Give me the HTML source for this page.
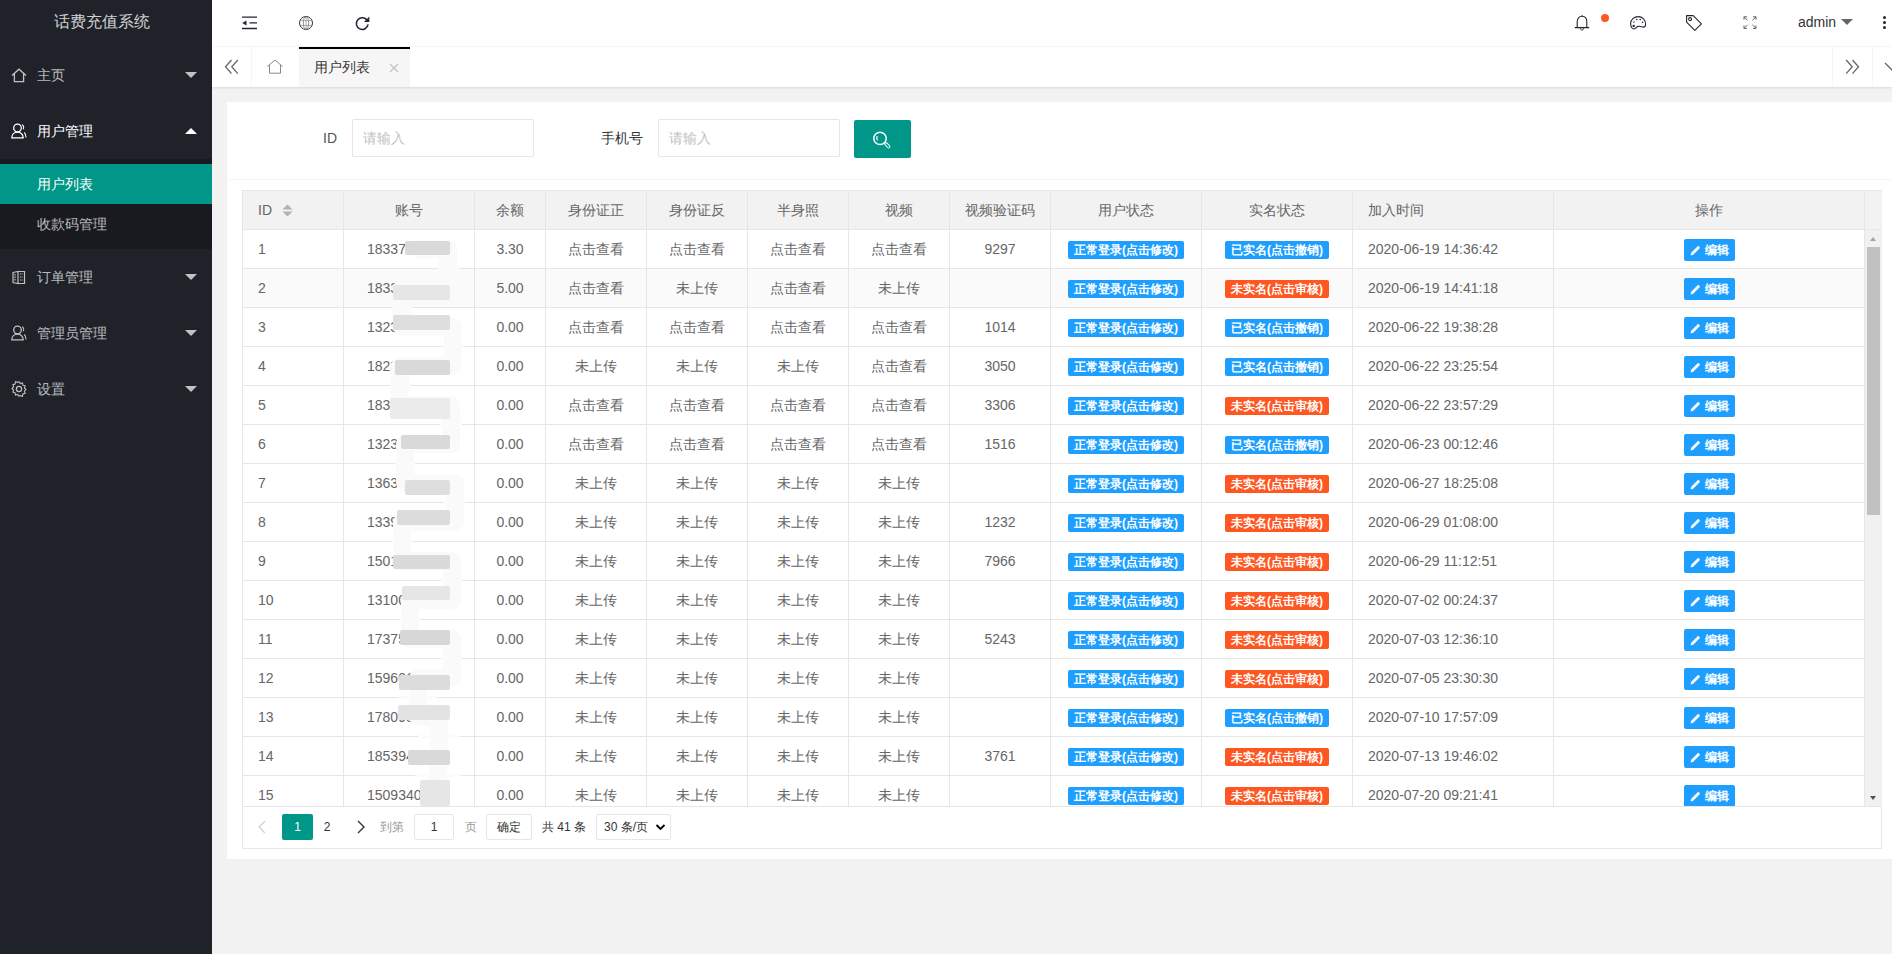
<!DOCTYPE html><html><head><meta charset="utf-8"><style>*{margin:0;padding:0;box-sizing:border-box}
html,body{width:1892px;height:954px;overflow:hidden;background:#f2f2f2;font-family:"Liberation Sans",sans-serif;font-size:14px;color:#666;position:relative}
.abs{position:absolute}
svg{display:block}
#side{position:absolute;left:0;top:0;width:212px;height:954px;background:#20222a}
#logo{position:absolute;left:-4px;top:0;width:212px;height:46px;line-height:44px;text-align:center;color:rgba(255,255,255,.8);font-size:16px}
.nav{position:absolute;left:0;width:212px;height:56px;line-height:56px;color:rgba(255,255,255,.7);font-size:14px}
.nav .t{position:absolute;left:37px;top:0}
.nav svg{position:absolute;left:11px;top:20px}
.nav .arr{position:absolute;left:185px;top:25px;width:0;height:0;border-left:6px solid transparent;border-right:6px solid transparent;border-top:6px solid #c2c2c2}
.nav .arr.up{border-top:0;border-bottom:6px solid #fff;top:25px}
#sub{position:absolute;left:0;top:159px;width:212px;height:90px;background:#191a20}
.subi{position:absolute;left:0;width:212px;height:40px;line-height:40px;color:rgba(255,255,255,.7)}
.subi span{position:absolute;left:37px}
#header{position:absolute;left:212px;top:0;width:1680px;height:47px;background:#fff;border-bottom:1px solid #f6f6f6}
#tabs{position:absolute;left:212px;top:47px;width:1680px;height:40px;background:#fff;box-shadow:0 1px 2px rgba(0,0,0,.1)}
#card{position:absolute;left:227px;top:102px;width:1700px;height:757px;background:#fff}
#cardline{position:absolute;left:227px;top:179px;width:1700px;height:1px;background:#f6f6f6}
.inp{position:absolute;height:38px;border:1px solid #e6e6e6;background:#fff;border-radius:2px;color:#c2c2c2;line-height:36px;padding-left:10px;font-size:14px}
.lbl{position:absolute;color:#333;font-size:14px;line-height:20px}
#tbl{position:absolute;left:242px;top:190px;width:1640px;height:659px;border:1px solid #e6e6e6;background:#fff}
.thead{position:absolute;left:243px;top:191px;width:1639px;height:39px;background:#f2f2f2;border-bottom:1px solid #e6e6e6}
.th{position:absolute;top:0;height:38px;line-height:38px;border-right:1px solid #e6e6e6;color:#666;text-align:center;white-space:nowrap}
.th .sort{position:absolute;left:38.5px;top:12.5px}
.tbody{position:absolute;left:243px;top:230px;width:1621px;height:576px;overflow:hidden}
.tr{position:absolute;left:0;width:1621px;height:39px;border-bottom:1px solid #e6e6e6;background:#fff}
.tr.even{background:#fafafa}
.td{position:absolute;top:0;height:38px;line-height:38px;border-right:1px solid #e6e6e6;color:#666;text-align:center;white-space:nowrap}
.badge{display:inline-block;height:18px;line-height:18px;padding:0 6px;border-radius:2px;color:#fff;font-size:12px;font-weight:bold;vertical-align:middle;position:relative;top:0}
.blue{background:#1e9fff}
.red{background:#ff5722}
.edit{display:inline-block;height:22px;line-height:22px;padding:0 6px;border-radius:2px;background:#1e9fff;color:#fff;font-size:12px;font-weight:bold;vertical-align:middle;position:relative;top:0}
.edit svg{display:inline-block;vertical-align:middle;margin-right:4px;position:relative;top:-1px}
#scroll{position:absolute;left:1864px;top:230px;width:18px;height:576px;background:#f1f1f1;border-left:1px solid #e6e6e6}
#pager{position:absolute;left:243px;top:806px;width:1638px;height:42px;background:#fff;border-top:1px solid #e6e6e6}

.blot{position:absolute;border-radius:2px}
.wcov{position:absolute;height:3px;background:#fbfbfb}
</style></head><body>
<div id="side">
  <div id="logo">话费充值系统</div>
  <div class="nav" style="top:47px"><svg width="16" height="16" viewBox="0 0 16 16"><path d="M1 8.6 8 2.2 15 8.6M3.4 6.6V14.6H12.6V6.6" fill="none" stroke="#c2c2c2" stroke-width="1.3"/></svg><span class="t">主页</span><i class="arr"></i></div>
  <div class="nav" style="top:103px;color:#fff"><svg width="16" height="16" viewBox="0 0 16 16"><circle cx="6.5" cy="5" r="3.8" fill="none" stroke="#fff" stroke-width="1.3"/><path d="M0.8 14.8c0-3.5 2.5-5.6 5.7-5.6s5.7 2.1 5.7 5.6z" fill="none" stroke="#fff" stroke-width="1.3"/><path d="M11 1.8c1.6 .6 2.2 2.5 1.2 4.5M13.2 9.5c1.2 1 1.8 2.6 1.8 5" fill="none" stroke="#fff" stroke-width="1.1"/></svg><span class="t">用户管理</span><i class="arr up"></i></div>
  <div id="sub">
    <div class="subi" style="top:5px;background:#009688;color:#fff"><span>用户列表</span></div>
    <div class="subi" style="top:45px"><span>收款码管理</span></div>
  </div>
  <div class="nav" style="top:249px"><svg width="16" height="16" viewBox="0 0 16 16"><path d="M2 3.5 7 2.5V14.5L2 13.5z M7 2.5H13.5V14.5H7" fill="none" stroke="#c2c2c2" stroke-width="1.2"/><path d="M9 5h3M9 8h3M9 11h3M4 5v7" stroke="#c2c2c2" stroke-width="1.2" stroke-dasharray="1.5 1"/></svg><span class="t">订单管理</span><i class="arr"></i></div>
  <div class="nav" style="top:305px"><svg width="16" height="16" viewBox="0 0 16 16"><circle cx="6.5" cy="5" r="3.8" fill="none" stroke="#c2c2c2" stroke-width="1.3"/><path d="M0.8 14.8c0-3.5 2.5-5.6 5.7-5.6s5.7 2.1 5.7 5.6z" fill="none" stroke="#c2c2c2" stroke-width="1.3"/><path d="M11 1.8c1.6 .6 2.2 2.5 1.2 4.5M13.2 9.5c1.2 1 1.8 2.6 1.8 5" fill="none" stroke="#c2c2c2" stroke-width="1.1"/></svg><span class="t">管理员管理</span><i class="arr"></i></div>
  <div class="nav" style="top:361px"><svg width="16" height="16" viewBox="0 0 16 16"><path d="M8 .8l1.3 1.8 2.2-.6.4 2.2 2.2.7-.7 2.1 1.6 1.6-1.6 1.6.7 2.1-2.2.7-.4 2.2-2.2-.6L8 15.2l-1.3-1.8-2.2.6-.4-2.2-2.2-.7.7-2.1L1 7.4 2.6 5.8l-.7-2.1 2.2-.7.4-2.2 2.2.6z" fill="none" stroke="#c2c2c2" stroke-width="1.1"/><circle cx="8" cy="8" r="2.6" fill="none" stroke="#c2c2c2" stroke-width="1.2"/></svg><span class="t">设置</span><i class="arr"></i></div>
</div>

<div id="header"></div>
<svg class="abs" style="left:240px;top:14px" width="20" height="18" viewBox="0 0 20 18"><path d="M2 3.1H17M9.5 8.9H17M2 14.5H17" stroke="#23262e" stroke-width="1.3"/><path d="M2.2 8.9 6.5 6.4V11.4z" fill="#23262e"/></svg>
<svg class="abs" style="left:298px;top:15px" width="16" height="16" viewBox="0 0 16 16"><circle cx="8" cy="8" r="6.5" fill="none" stroke="#333" stroke-width="1"/><ellipse cx="8" cy="8" rx="2.7" ry="6.5" fill="none" stroke="#666" stroke-width="0.7"/><path d="M1.8 5.6H14.2M1.8 10.4H14.2M8 1.5V14.5" stroke="#777" stroke-width="0.6"/></svg>
<svg class="abs" style="left:354px;top:15px" width="17" height="17" viewBox="0 0 17 17"><path d="M13.2 5.3A5.9 5.9 0 1 0 14.1 9.4" fill="none" stroke="#23262e" stroke-width="1.5"/><path d="M15.3 1.6V7H10z" fill="#23262e"/></svg>
<svg class="abs" style="left:1573px;top:14px" width="18" height="18" viewBox="0 0 18 18"><path d="M4.2 13.5V7.8C4.2 4.6 6.1 2.3 9 2.3S13.8 4.6 13.8 7.8V13.5" fill="none" stroke="#23262e" stroke-width="1.1"/><path d="M1.8 13.6H16.2" stroke="#23262e" stroke-width="1.3"/><path d="M7.4 14.2C7.4 15.4 8.1 16 9 16S10.6 15.4 10.6 14.2" fill="none" stroke="#23262e" stroke-width="1"/><path d="M8.4 1.8H9.6" stroke="#23262e" stroke-width="1"/></svg>
<div class="abs" style="left:1601px;top:14px;width:8px;height:8px;border-radius:50%;background:#ff5722"></div>
<svg class="abs" style="left:1629px;top:15px" width="18" height="16" viewBox="0 0 18 16"><path d="M9.4 1.6C5 1.6 1.6 4.5 1.6 8.6c0 3 1.6 5.4 3.4 5.4 2 0 2.2-2.2 4-2.6 2.4-.5 3.4 .7 5.3 .7 1.7 0 2.3-1.3 2.3-2.8 0-4.4-3.2-7.7-7.2-7.7z" fill="none" stroke="#23262e" stroke-width="1.1"/><circle cx="4.7" cy="10.9" r="1.2" fill="#23262e"/><circle cx="4.9" cy="7" r=".8" fill="#23262e"/><circle cx="7.8" cy="4.5" r=".8" fill="#23262e"/><circle cx="11.2" cy="4.6" r=".8" fill="#23262e"/><circle cx="13.5" cy="7.3" r=".8" fill="#23262e"/></svg>
<svg class="abs" style="left:1685px;top:14px" width="18" height="18" viewBox="0 0 18 18"><path d="M1.6 1.6H8.2L16.4 9.8 9.8 16.4 1.6 8.2z" fill="none" stroke="#23262e" stroke-width="1.1" stroke-linejoin="round"/><circle cx="5.1" cy="5.1" r="1.5" fill="none" stroke="#23262e" stroke-width="1.1"/></svg>
<svg class="abs" style="left:1742px;top:15px" width="16" height="15" viewBox="0 0 16 15"><path d="M2 1.8 5.6 5.4M2 1.8H5M2 1.8V4.8M14 1.8 10.4 5.4M14 1.8H11M14 1.8V4.8M2 13.4 5.6 9.8M2 13.4H5M2 13.4V10.4M14 13.4 10.4 9.8M14 13.4H11M14 13.4V10.4" fill="none" stroke="#555" stroke-width="0.9"/></svg>
<div class="abs" style="left:1798px;top:14px;font-size:14px;line-height:16px;color:#333">admin</div>
<div class="abs" style="left:1841px;top:19px;width:0;height:0;border-left:6px solid transparent;border-right:6px solid transparent;border-top:6px solid #666"></div>
<div class="abs" style="left:1882.5px;top:16px;width:3px;height:3px;background:#23262e;border-radius:50%"></div>
<div class="abs" style="left:1882.5px;top:21px;width:3px;height:3px;background:#23262e;border-radius:50%"></div>
<div class="abs" style="left:1882.5px;top:26px;width:3px;height:3px;background:#23262e;border-radius:50%"></div>
<div id="tabs"></div>
<div class="abs" style="left:251px;top:47px;width:1px;height:40px;background:#f6f6f6"></div>
<div class="abs" style="left:1832px;top:47px;width:1px;height:40px;background:#f6f6f6"></div>
<div class="abs" style="left:1872px;top:47px;width:1px;height:40px;background:#f6f6f6"></div>
<svg class="abs" style="left:223px;top:58px" width="18" height="18" viewBox="0 0 18 18"><path d="M8.5 2 2.5 8.8 8.5 15.6M14.8 2 8.8 8.8 14.8 15.6" fill="none" stroke="#666" stroke-width="1.3"/></svg>
<svg class="abs" style="left:266px;top:58px" width="18" height="18" viewBox="0 0 18 18"><path d="M1.4 8.6 9 2 16.6 8.6M3.5 6.8V15.2H14.5V6.8" fill="none" stroke="#888" stroke-width="1"/></svg>
<div class="abs" style="left:299px;top:47px;width:111px;height:40px;background:#f6f6f6;border-top:2px solid #000"></div>
<div class="abs" style="left:314px;top:57px;font-size:14px;line-height:20px;color:#333">用户列表</div>
<svg class="abs" style="left:389px;top:63px" width="10" height="10" viewBox="0 0 10 10"><path d="M1 1 9 9M9 1 1 9" stroke="#c2c2c2" stroke-width="1.1"/></svg>
<svg class="abs" style="left:1844px;top:58px" width="18" height="18" viewBox="0 0 18 18"><path d="M2.2 2 8.2 8.8 2.2 15.6M8.5 2 14.5 8.8 8.5 15.6" fill="none" stroke="#666" stroke-width="1.3"/></svg>
<svg class="abs" style="left:1883px;top:58px" width="18" height="18" viewBox="0 0 18 18"><path d="M2 5 9 12 16 5" fill="none" stroke="#666" stroke-width="1.3"/></svg>
<div id="card"></div>
<div id="cardline"></div>
<div class="lbl" style="left:323px;top:128px;color:#555">ID</div>
<div class="inp" style="left:352px;top:119px;width:182px">请输入</div>
<div class="lbl" style="left:601px;top:128px">手机号</div>
<div class="inp" style="left:658px;top:119px;width:182px">请输入</div>
<div class="abs" style="left:854px;top:120px;width:57px;height:38px;background:#009688;border-radius:2px"></div>
<svg class="abs" style="left:872px;top:130px" width="20" height="20" viewBox="0 0 20 20"><circle cx="8" cy="8.4" r="6.2" fill="none" stroke="#fff" stroke-width="1.5"/><path d="M5.3 6.2A3.6 3.6 0 0 0 5.5 10.4" fill="none" stroke="#fff" stroke-width="1.3"/><rect x="12.2" y="14" width="6.2" height="2.6" rx="1.3" transform="rotate(45 15.3 15.3)" fill="none" stroke="#fff" stroke-width="1"/></svg>
<div id="tbl"></div>

<div class="thead"><div class="th" style="left:0px;width:101px;text-align:left;padding-left:15px">ID<svg class="sort" width="11" height="13" viewBox="0 0 11 13"><path d="M5.5 0.5 10.5 5.5H0.5z" fill="#b2b2b2"/><path d="M5.5 12.5 10.5 7.5H0.5z" fill="#b2b2b2"/></svg></div><div class="th" style="left:101px;width:131px">账号</div><div class="th" style="left:232px;width:71px">余额</div><div class="th" style="left:303px;width:101px">身份证正</div><div class="th" style="left:404px;width:101px">身份证反</div><div class="th" style="left:505px;width:101px">半身照</div><div class="th" style="left:606px;width:101px">视频</div><div class="th" style="left:707px;width:101px">视频验证码</div><div class="th" style="left:808px;width:151px">用户状态</div><div class="th" style="left:959px;width:151px">实名状态</div><div class="th" style="left:1110px;width:201px;text-align:left;padding-left:15px">加入时间</div><div class="th" style="left:1311px;width:311px">操作</div></div>
<div class="tbody"><div class="tr" style="top:0px"><div class="td" style="left:0px;width:101px;text-align:left;padding-left:15px">1</div><div class="td" style="left:101px;width:131px;text-align:left;padding-left:23px">18337</div><div class="td" style="left:232px;width:71px">3.30</div><div class="td" style="left:303px;width:101px">点击查看</div><div class="td" style="left:404px;width:101px">点击查看</div><div class="td" style="left:505px;width:101px">点击查看</div><div class="td" style="left:606px;width:101px">点击查看</div><div class="td" style="left:707px;width:101px">9297</div><div class="td" style="left:808px;width:151px"><span class="badge blue">正常登录(点击修改)</span></div><div class="td" style="left:959px;width:151px"><span class="badge blue">已实名(点击撤销)</span></div><div class="td" style="left:1110px;width:201px;text-align:left;padding-left:15px">2020-06-19 14:36:42</div><div class="td" style="left:1311px;width:311px"><span class="edit"><svg width="11" height="11" viewBox="0 0 11 11"><path d="M8.2 0.8 10.2 2.8 3.2 9.8 0.6 10.4 1.2 7.8z" fill="#fff"/></svg>编辑</span></div></div><div class="tr even" style="top:39px"><div class="td" style="left:0px;width:101px;text-align:left;padding-left:15px">2</div><div class="td" style="left:101px;width:131px;text-align:left;padding-left:23px">18331</div><div class="td" style="left:232px;width:71px">5.00</div><div class="td" style="left:303px;width:101px">点击查看</div><div class="td" style="left:404px;width:101px">未上传</div><div class="td" style="left:505px;width:101px">点击查看</div><div class="td" style="left:606px;width:101px">未上传</div><div class="td" style="left:707px;width:101px"></div><div class="td" style="left:808px;width:151px"><span class="badge blue">正常登录(点击修改)</span></div><div class="td" style="left:959px;width:151px"><span class="badge red">未实名(点击审核)</span></div><div class="td" style="left:1110px;width:201px;text-align:left;padding-left:15px">2020-06-19 14:41:18</div><div class="td" style="left:1311px;width:311px"><span class="edit"><svg width="11" height="11" viewBox="0 0 11 11"><path d="M8.2 0.8 10.2 2.8 3.2 9.8 0.6 10.4 1.2 7.8z" fill="#fff"/></svg>编辑</span></div></div><div class="tr" style="top:78px"><div class="td" style="left:0px;width:101px;text-align:left;padding-left:15px">3</div><div class="td" style="left:101px;width:131px;text-align:left;padding-left:23px">1323</div><div class="td" style="left:232px;width:71px">0.00</div><div class="td" style="left:303px;width:101px">点击查看</div><div class="td" style="left:404px;width:101px">点击查看</div><div class="td" style="left:505px;width:101px">点击查看</div><div class="td" style="left:606px;width:101px">点击查看</div><div class="td" style="left:707px;width:101px">1014</div><div class="td" style="left:808px;width:151px"><span class="badge blue">正常登录(点击修改)</span></div><div class="td" style="left:959px;width:151px"><span class="badge blue">已实名(点击撤销)</span></div><div class="td" style="left:1110px;width:201px;text-align:left;padding-left:15px">2020-06-22 19:38:28</div><div class="td" style="left:1311px;width:311px"><span class="edit"><svg width="11" height="11" viewBox="0 0 11 11"><path d="M8.2 0.8 10.2 2.8 3.2 9.8 0.6 10.4 1.2 7.8z" fill="#fff"/></svg>编辑</span></div></div><div class="tr" style="top:117px"><div class="td" style="left:0px;width:101px;text-align:left;padding-left:15px">4</div><div class="td" style="left:101px;width:131px;text-align:left;padding-left:23px">18235</div><div class="td" style="left:232px;width:71px">0.00</div><div class="td" style="left:303px;width:101px">未上传</div><div class="td" style="left:404px;width:101px">未上传</div><div class="td" style="left:505px;width:101px">未上传</div><div class="td" style="left:606px;width:101px">点击查看</div><div class="td" style="left:707px;width:101px">3050</div><div class="td" style="left:808px;width:151px"><span class="badge blue">正常登录(点击修改)</span></div><div class="td" style="left:959px;width:151px"><span class="badge blue">已实名(点击撤销)</span></div><div class="td" style="left:1110px;width:201px;text-align:left;padding-left:15px">2020-06-22 23:25:54</div><div class="td" style="left:1311px;width:311px"><span class="edit"><svg width="11" height="11" viewBox="0 0 11 11"><path d="M8.2 0.8 10.2 2.8 3.2 9.8 0.6 10.4 1.2 7.8z" fill="#fff"/></svg>编辑</span></div></div><div class="tr" style="top:156px"><div class="td" style="left:0px;width:101px;text-align:left;padding-left:15px">5</div><div class="td" style="left:101px;width:131px;text-align:left;padding-left:23px">1833</div><div class="td" style="left:232px;width:71px">0.00</div><div class="td" style="left:303px;width:101px">点击查看</div><div class="td" style="left:404px;width:101px">点击查看</div><div class="td" style="left:505px;width:101px">点击查看</div><div class="td" style="left:606px;width:101px">点击查看</div><div class="td" style="left:707px;width:101px">3306</div><div class="td" style="left:808px;width:151px"><span class="badge blue">正常登录(点击修改)</span></div><div class="td" style="left:959px;width:151px"><span class="badge red">未实名(点击审核)</span></div><div class="td" style="left:1110px;width:201px;text-align:left;padding-left:15px">2020-06-22 23:57:29</div><div class="td" style="left:1311px;width:311px"><span class="edit"><svg width="11" height="11" viewBox="0 0 11 11"><path d="M8.2 0.8 10.2 2.8 3.2 9.8 0.6 10.4 1.2 7.8z" fill="#fff"/></svg>编辑</span></div></div><div class="tr" style="top:195px"><div class="td" style="left:0px;width:101px;text-align:left;padding-left:15px">6</div><div class="td" style="left:101px;width:131px;text-align:left;padding-left:23px">13233</div><div class="td" style="left:232px;width:71px">0.00</div><div class="td" style="left:303px;width:101px">点击查看</div><div class="td" style="left:404px;width:101px">点击查看</div><div class="td" style="left:505px;width:101px">点击查看</div><div class="td" style="left:606px;width:101px">点击查看</div><div class="td" style="left:707px;width:101px">1516</div><div class="td" style="left:808px;width:151px"><span class="badge blue">正常登录(点击修改)</span></div><div class="td" style="left:959px;width:151px"><span class="badge blue">已实名(点击撤销)</span></div><div class="td" style="left:1110px;width:201px;text-align:left;padding-left:15px">2020-06-23 00:12:46</div><div class="td" style="left:1311px;width:311px"><span class="edit"><svg width="11" height="11" viewBox="0 0 11 11"><path d="M8.2 0.8 10.2 2.8 3.2 9.8 0.6 10.4 1.2 7.8z" fill="#fff"/></svg>编辑</span></div></div><div class="tr" style="top:234px"><div class="td" style="left:0px;width:101px;text-align:left;padding-left:15px">7</div><div class="td" style="left:101px;width:131px;text-align:left;padding-left:23px">13634</div><div class="td" style="left:232px;width:71px">0.00</div><div class="td" style="left:303px;width:101px">未上传</div><div class="td" style="left:404px;width:101px">未上传</div><div class="td" style="left:505px;width:101px">未上传</div><div class="td" style="left:606px;width:101px">未上传</div><div class="td" style="left:707px;width:101px"></div><div class="td" style="left:808px;width:151px"><span class="badge blue">正常登录(点击修改)</span></div><div class="td" style="left:959px;width:151px"><span class="badge red">未实名(点击审核)</span></div><div class="td" style="left:1110px;width:201px;text-align:left;padding-left:15px">2020-06-27 18:25:08</div><div class="td" style="left:1311px;width:311px"><span class="edit"><svg width="11" height="11" viewBox="0 0 11 11"><path d="M8.2 0.8 10.2 2.8 3.2 9.8 0.6 10.4 1.2 7.8z" fill="#fff"/></svg>编辑</span></div></div><div class="tr" style="top:273px"><div class="td" style="left:0px;width:101px;text-align:left;padding-left:15px">8</div><div class="td" style="left:101px;width:131px;text-align:left;padding-left:23px">13399</div><div class="td" style="left:232px;width:71px">0.00</div><div class="td" style="left:303px;width:101px">未上传</div><div class="td" style="left:404px;width:101px">未上传</div><div class="td" style="left:505px;width:101px">未上传</div><div class="td" style="left:606px;width:101px">未上传</div><div class="td" style="left:707px;width:101px">1232</div><div class="td" style="left:808px;width:151px"><span class="badge blue">正常登录(点击修改)</span></div><div class="td" style="left:959px;width:151px"><span class="badge red">未实名(点击审核)</span></div><div class="td" style="left:1110px;width:201px;text-align:left;padding-left:15px">2020-06-29 01:08:00</div><div class="td" style="left:1311px;width:311px"><span class="edit"><svg width="11" height="11" viewBox="0 0 11 11"><path d="M8.2 0.8 10.2 2.8 3.2 9.8 0.6 10.4 1.2 7.8z" fill="#fff"/></svg>编辑</span></div></div><div class="tr" style="top:312px"><div class="td" style="left:0px;width:101px;text-align:left;padding-left:15px">9</div><div class="td" style="left:101px;width:131px;text-align:left;padding-left:23px">1501</div><div class="td" style="left:232px;width:71px">0.00</div><div class="td" style="left:303px;width:101px">未上传</div><div class="td" style="left:404px;width:101px">未上传</div><div class="td" style="left:505px;width:101px">未上传</div><div class="td" style="left:606px;width:101px">未上传</div><div class="td" style="left:707px;width:101px">7966</div><div class="td" style="left:808px;width:151px"><span class="badge blue">正常登录(点击修改)</span></div><div class="td" style="left:959px;width:151px"><span class="badge red">未实名(点击审核)</span></div><div class="td" style="left:1110px;width:201px;text-align:left;padding-left:15px">2020-06-29 11:12:51</div><div class="td" style="left:1311px;width:311px"><span class="edit"><svg width="11" height="11" viewBox="0 0 11 11"><path d="M8.2 0.8 10.2 2.8 3.2 9.8 0.6 10.4 1.2 7.8z" fill="#fff"/></svg>编辑</span></div></div><div class="tr" style="top:351px"><div class="td" style="left:0px;width:101px;text-align:left;padding-left:15px">10</div><div class="td" style="left:101px;width:131px;text-align:left;padding-left:23px">131009</div><div class="td" style="left:232px;width:71px">0.00</div><div class="td" style="left:303px;width:101px">未上传</div><div class="td" style="left:404px;width:101px">未上传</div><div class="td" style="left:505px;width:101px">未上传</div><div class="td" style="left:606px;width:101px">未上传</div><div class="td" style="left:707px;width:101px"></div><div class="td" style="left:808px;width:151px"><span class="badge blue">正常登录(点击修改)</span></div><div class="td" style="left:959px;width:151px"><span class="badge red">未实名(点击审核)</span></div><div class="td" style="left:1110px;width:201px;text-align:left;padding-left:15px">2020-07-02 00:24:37</div><div class="td" style="left:1311px;width:311px"><span class="edit"><svg width="11" height="11" viewBox="0 0 11 11"><path d="M8.2 0.8 10.2 2.8 3.2 9.8 0.6 10.4 1.2 7.8z" fill="#fff"/></svg>编辑</span></div></div><div class="tr" style="top:390px"><div class="td" style="left:0px;width:101px;text-align:left;padding-left:15px">11</div><div class="td" style="left:101px;width:131px;text-align:left;padding-left:23px">17375</div><div class="td" style="left:232px;width:71px">0.00</div><div class="td" style="left:303px;width:101px">未上传</div><div class="td" style="left:404px;width:101px">未上传</div><div class="td" style="left:505px;width:101px">未上传</div><div class="td" style="left:606px;width:101px">未上传</div><div class="td" style="left:707px;width:101px">5243</div><div class="td" style="left:808px;width:151px"><span class="badge blue">正常登录(点击修改)</span></div><div class="td" style="left:959px;width:151px"><span class="badge red">未实名(点击审核)</span></div><div class="td" style="left:1110px;width:201px;text-align:left;padding-left:15px">2020-07-03 12:36:10</div><div class="td" style="left:1311px;width:311px"><span class="edit"><svg width="11" height="11" viewBox="0 0 11 11"><path d="M8.2 0.8 10.2 2.8 3.2 9.8 0.6 10.4 1.2 7.8z" fill="#fff"/></svg>编辑</span></div></div><div class="tr" style="top:429px"><div class="td" style="left:0px;width:101px;text-align:left;padding-left:15px">12</div><div class="td" style="left:101px;width:131px;text-align:left;padding-left:23px">159601</div><div class="td" style="left:232px;width:71px">0.00</div><div class="td" style="left:303px;width:101px">未上传</div><div class="td" style="left:404px;width:101px">未上传</div><div class="td" style="left:505px;width:101px">未上传</div><div class="td" style="left:606px;width:101px">未上传</div><div class="td" style="left:707px;width:101px"></div><div class="td" style="left:808px;width:151px"><span class="badge blue">正常登录(点击修改)</span></div><div class="td" style="left:959px;width:151px"><span class="badge red">未实名(点击审核)</span></div><div class="td" style="left:1110px;width:201px;text-align:left;padding-left:15px">2020-07-05 23:30:30</div><div class="td" style="left:1311px;width:311px"><span class="edit"><svg width="11" height="11" viewBox="0 0 11 11"><path d="M8.2 0.8 10.2 2.8 3.2 9.8 0.6 10.4 1.2 7.8z" fill="#fff"/></svg>编辑</span></div></div><div class="tr" style="top:468px"><div class="td" style="left:0px;width:101px;text-align:left;padding-left:15px">13</div><div class="td" style="left:101px;width:131px;text-align:left;padding-left:23px">178098</div><div class="td" style="left:232px;width:71px">0.00</div><div class="td" style="left:303px;width:101px">未上传</div><div class="td" style="left:404px;width:101px">未上传</div><div class="td" style="left:505px;width:101px">未上传</div><div class="td" style="left:606px;width:101px">未上传</div><div class="td" style="left:707px;width:101px"></div><div class="td" style="left:808px;width:151px"><span class="badge blue">正常登录(点击修改)</span></div><div class="td" style="left:959px;width:151px"><span class="badge blue">已实名(点击撤销)</span></div><div class="td" style="left:1110px;width:201px;text-align:left;padding-left:15px">2020-07-10 17:57:09</div><div class="td" style="left:1311px;width:311px"><span class="edit"><svg width="11" height="11" viewBox="0 0 11 11"><path d="M8.2 0.8 10.2 2.8 3.2 9.8 0.6 10.4 1.2 7.8z" fill="#fff"/></svg>编辑</span></div></div><div class="tr" style="top:507px"><div class="td" style="left:0px;width:101px;text-align:left;padding-left:15px">14</div><div class="td" style="left:101px;width:131px;text-align:left;padding-left:23px">185394</div><div class="td" style="left:232px;width:71px">0.00</div><div class="td" style="left:303px;width:101px">未上传</div><div class="td" style="left:404px;width:101px">未上传</div><div class="td" style="left:505px;width:101px">未上传</div><div class="td" style="left:606px;width:101px">未上传</div><div class="td" style="left:707px;width:101px">3761</div><div class="td" style="left:808px;width:151px"><span class="badge blue">正常登录(点击修改)</span></div><div class="td" style="left:959px;width:151px"><span class="badge red">未实名(点击审核)</span></div><div class="td" style="left:1110px;width:201px;text-align:left;padding-left:15px">2020-07-13 19:46:02</div><div class="td" style="left:1311px;width:311px"><span class="edit"><svg width="11" height="11" viewBox="0 0 11 11"><path d="M8.2 0.8 10.2 2.8 3.2 9.8 0.6 10.4 1.2 7.8z" fill="#fff"/></svg>编辑</span></div></div><div class="tr" style="top:546px"><div class="td" style="left:0px;width:101px;text-align:left;padding-left:15px">15</div><div class="td" style="left:101px;width:131px;text-align:left;padding-left:23px">150934004</div><div class="td" style="left:232px;width:71px">0.00</div><div class="td" style="left:303px;width:101px">未上传</div><div class="td" style="left:404px;width:101px">未上传</div><div class="td" style="left:505px;width:101px">未上传</div><div class="td" style="left:606px;width:101px">未上传</div><div class="td" style="left:707px;width:101px"></div><div class="td" style="left:808px;width:151px"><span class="badge blue">正常登录(点击修改)</span></div><div class="td" style="left:959px;width:151px"><span class="badge red">未实名(点击审核)</span></div><div class="td" style="left:1110px;width:201px;text-align:left;padding-left:15px">2020-07-20 09:21:41</div><div class="td" style="left:1311px;width:311px"><span class="edit"><svg width="11" height="11" viewBox="0 0 11 11"><path d="M8.2 0.8 10.2 2.8 3.2 9.8 0.6 10.4 1.2 7.8z" fill="#fff"/></svg>编辑</span></div></div></div>
<svg class="abs" style="left:0;top:0" width="1892" height="954"><path d="M418 249 L448 249 L448 288 L402 288 L402 327 L453 327 L453 366 L400 366 L400 405 L451 405 L451 444 L405 444 L405 483 L455 483 L455 522 L402 522 L402 561 L452 561 L452 600 L410 600 L410 639 L452 639 L452 678 L418 678 L418 717 L439 717 L439 756 L438 756 L438 795 L430 795" fill="none" stroke="#fafafa" stroke-width="18" stroke-linejoin="round" stroke-linecap="round"/></svg><div class="blot" style="left:405px;top:241px;width:45px;height:14px;background:#d9d9d9"></div><div class="blot" style="left:393px;top:285px;width:57px;height:15px;background:#e6e6e6"></div><div class="blot" style="left:393px;top:315px;width:57px;height:15px;background:#dedede"></div><div class="blot" style="left:395px;top:360px;width:55px;height:15px;background:#d9d9d9"></div><div class="blot" style="left:390px;top:398px;width:60px;height:21px;background:#ebebeb"></div><div class="blot" style="left:401px;top:435px;width:49px;height:14px;background:#d9d9d9"></div><div class="blot" style="left:405px;top:480px;width:45px;height:15px;background:#dedede"></div><div class="blot" style="left:397px;top:510px;width:53px;height:15px;background:#dcdcdc"></div><div class="blot" style="left:393px;top:555px;width:57px;height:14px;background:#dadada"></div><div class="blot" style="left:402px;top:586px;width:48px;height:14px;background:#e6e6e6"></div><div class="blot" style="left:400px;top:630px;width:50px;height:15px;background:#d7d7d7"></div><div class="blot" style="left:399px;top:675px;width:51px;height:15px;background:#dcdcdc"></div><div class="blot" style="left:398px;top:705px;width:52px;height:15px;background:#e3e3e3"></div><div class="blot" style="left:408px;top:750px;width:42px;height:15px;background:#d9d9d9"></div><div class="blot" style="left:420px;top:780px;width:30px;height:26px;background:#e6e6e6"></div><div class="wcov" style="left:438px;top:267px;width:21px"></div><div class="wcov" style="left:392px;top:306px;width:20px"></div><div class="wcov" style="left:443px;top:345px;width:20px"></div><div class="wcov" style="left:390px;top:384px;width:21px"></div><div class="wcov" style="left:440px;top:423px;width:22px"></div><div class="wcov" style="left:395px;top:462px;width:20px"></div><div class="wcov" style="left:444px;top:501px;width:22px"></div><div class="wcov" style="left:392px;top:540px;width:20px"></div><div class="wcov" style="left:441px;top:579px;width:21px"></div><div class="wcov" style="left:400px;top:618px;width:20px"></div><div class="wcov" style="left:441px;top:657px;width:21px"></div><div class="wcov" style="left:398px;top:696px;width:39px"></div><div class="wcov" style="left:418px;top:735px;width:42px"></div><div class="wcov" style="left:415px;top:774px;width:46px"></div>
<div id="scroll"></div>
<div class="abs" style="left:1870px;top:237px;width:0;height:0;border-left:3.5px solid transparent;border-right:3.5px solid transparent;border-bottom:4px solid #a3a3a3"></div>
<div class="abs" style="left:1867px;top:247px;width:13px;height:268px;background:#c1c1c1"></div>
<div class="abs" style="left:1870px;top:796px;width:0;height:0;border-left:3.5px solid transparent;border-right:3.5px solid transparent;border-top:4px solid #505050"></div>
<div id="pager"></div>
<svg class="abs" style="left:256px;top:819px" width="12" height="16" viewBox="0 0 12 16"><path d="M9 2 3 8 9 14" fill="none" stroke="#d2d2d2" stroke-width="1.4"/></svg>
<div class="abs" style="left:282px;top:814px;width:31px;height:26px;background:#009688;border-radius:2px;color:#fff;font-size:12px;line-height:26px;text-align:center">1</div>
<div class="abs" style="left:313px;top:814px;width:28px;height:26px;color:#333;font-size:12px;line-height:26px;text-align:center">2</div>
<svg class="abs" style="left:355px;top:819px" width="12" height="16" viewBox="0 0 12 16"><path d="M3 2 9 8 3 14" fill="none" stroke="#333" stroke-width="1.4"/></svg>
<div class="abs" style="left:380px;top:818px;color:#999;font-size:12px;line-height:18px">到第</div>
<div class="abs" style="left:414px;top:814px;width:40px;height:26px;border:1px solid #e6e6e6;border-radius:2px;color:#333;font-size:12px;line-height:24px;text-align:center">1</div>
<div class="abs" style="left:465px;top:818px;color:#999;font-size:12px;line-height:18px">页</div>
<div class="abs" style="left:486px;top:814px;width:46px;height:26px;border:1px solid #e6e6e6;border-radius:2px;color:#333;font-size:12px;line-height:24px;text-align:center">确定</div>
<div class="abs" style="left:542px;top:818px;color:#333;font-size:12px;line-height:18px">共 41 条</div>
<div class="abs" style="left:596px;top:814px;width:75px;height:26px;border:1px solid #e6e6e6;border-radius:2px;color:#333;font-size:12px;line-height:24px;padding-left:7px">30 条/页</div>
<svg class="abs" style="left:655px;top:822px" width="11" height="10" viewBox="0 0 11 10"><path d="M1.5 3 5.5 7 9.5 3" fill="none" stroke="#000" stroke-width="1.8"/></svg>

</body></html>
